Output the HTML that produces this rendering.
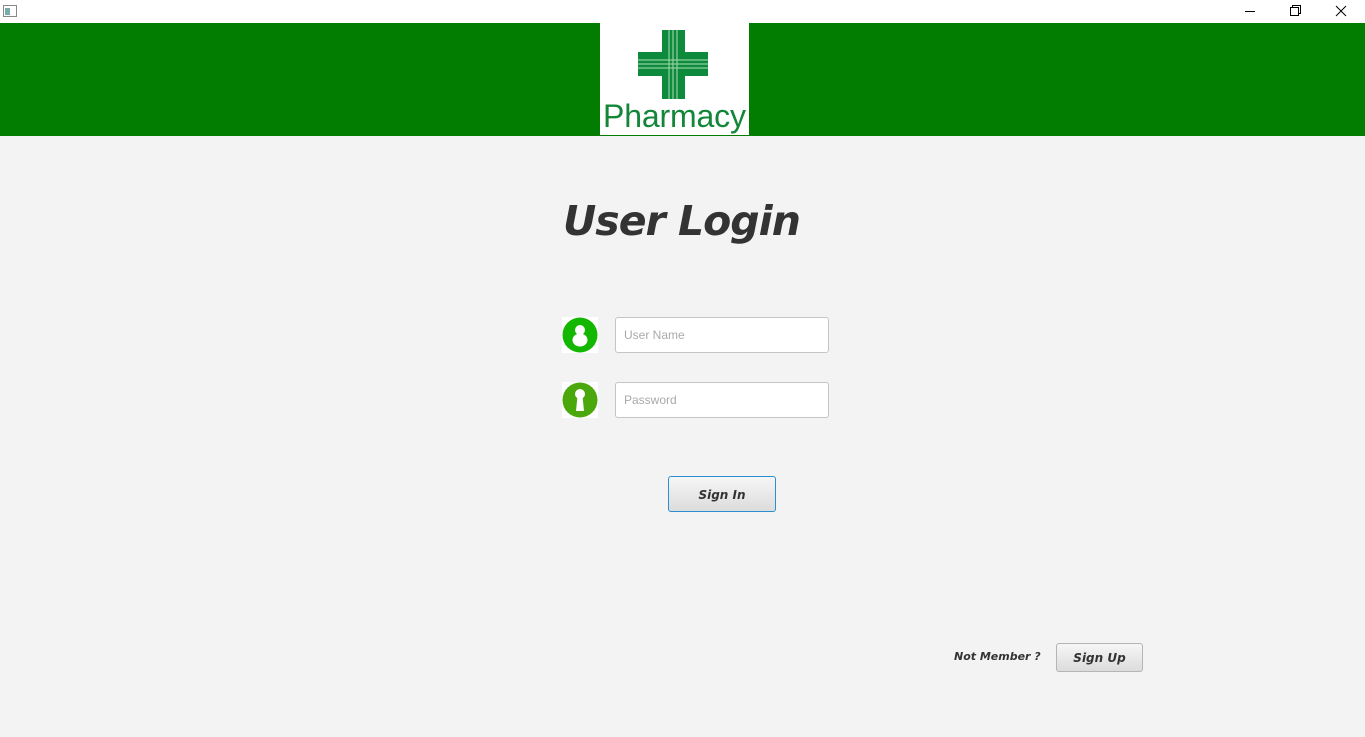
<!DOCTYPE html>
<html><head><style>
body{margin:0;width:1365px;height:737px;background:#f3f3f3;position:relative;overflow:hidden;font-family:"Liberation Sans",sans-serif}
.a{position:absolute}
.field{position:absolute;left:615px;background:#fff;border:1px solid #c5c5c5;border-radius:3px;font-size:12px;color:#aaa;line-height:34px;padding-left:8px;box-sizing:border-box;width:214px;height:36px}
.btn{position:absolute;background:linear-gradient(#f6f6f6,#dcdcdc);border:1px solid #b5b5b5;border-radius:3px;font-weight:bold;font-style:italic;color:#333;text-align:center;box-sizing:border-box}
</style></head><body>
<div class="a" style="left:0;top:0;width:1365px;height:23px;background:#fff"></div>
<svg class="a" style="left:3px;top:5px" width="14" height="12"><rect x="0.5" y="0.5" width="13" height="11" fill="#fff" stroke="#888"/><rect x="2" y="3" width="5" height="7" fill="#7aa"/></svg>
<svg class="a" style="left:1240px;top:0" width="125" height="23"><path d="M5 11.5h10" stroke="#000"/><rect x="50.5" y="7.5" width="8" height="8" fill="none" stroke="#000"/><path d="M52.5 7.5v-2h8v8h-2" fill="none" stroke="#000"/><path d="M96 6l10 10M106 6l-10 10" stroke="#000"/></svg>
<div class="a" style="left:0;top:23px;width:1365px;height:113px;background:#027d01"></div>
<div class="a" style="left:600px;top:23px;width:149px;height:112px;background:#fff"></div>
<svg class="a" style="left:600px;top:23px" width="149" height="112">
<rect x="62" y="7" width="23" height="69" fill="#0e8a3c"/>
<rect x="38" y="29" width="70" height="24" fill="#0e8a3c"/>
<path d="M69 7v69M73 7v69M77 7v69M38 37h70M38 41h70M38 45h70" stroke="#8fd0a0" stroke-width="1.2"/>
<text x="3" y="104" font-family="Liberation Sans" font-size="32" fill="#14863a" textLength="143">Pharmacy</text>
</svg>
<div class="a" style="left:563px;top:197px;font-size:41px;font-weight:bold;font-style:italic;color:#333;font-family:'DejaVu Sans','Liberation Sans',sans-serif;letter-spacing:-1px">User Login</div>
<svg class="a" style="left:562px;top:317px" width="36" height="36"><rect width="36" height="36" fill="#fff"/><circle cx="18" cy="18" r="17.5" fill="#14b700"/><circle cx="18" cy="13" r="5" fill="#fff"/><ellipse cx="18" cy="23" rx="7.5" ry="6.5" fill="#fff"/></svg>
<svg class="a" style="left:562px;top:382px" width="36" height="36"><rect width="36" height="36" fill="#fff"/><circle cx="18" cy="18" r="17.5" fill="#4aa80c"/><circle cx="18" cy="12" r="5" fill="#fff"/><path d="M15.5 14L14 29h8l-1.5-15z" fill="#fff"/></svg>
<div class="field" style="top:317px">User Name</div>
<div class="field" style="top:382px">Password</div>
<div class="btn" style="left:668px;top:476px;width:108px;height:36px;line-height:36px;border-color:#2a8fd0;font-family:'DejaVu Sans',sans-serif;font-size:12px">Sign In</div>
<div class="a" style="left:954px;top:650px;font-weight:bold;font-style:italic;font-size:11px;color:#333;font-family:'DejaVu Sans',sans-serif">Not Member ?</div>
<div class="btn" style="left:1056px;top:643px;width:87px;height:29px;line-height:29px;font-family:'DejaVu Sans',sans-serif;font-size:12px">Sign Up</div>
</body></html>
